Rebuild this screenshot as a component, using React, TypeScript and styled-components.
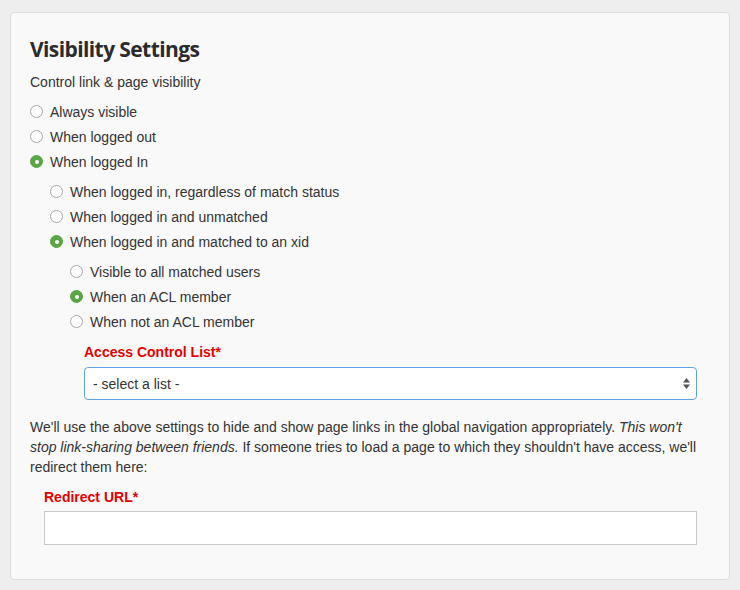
import React, { useState } from "react";
import styled, { createGlobalStyle } from "styled-components";

const GlobalStyle = createGlobalStyle`
  html, body {
    margin: 0;
    padding: 0;
    background: #eeeeee;
  }
  * {
    box-sizing: border-box;
  }
`;

type Option = { id: string; label: string };

const topOptions: Option[] = [
  { id: "always", label: "Always visible" },
  { id: "out", label: "When logged out" },
  { id: "in", label: "When logged In" },
];

const loggedInOptions: Option[] = [
  { id: "any", label: "When logged in, regardless of match status" },
  { id: "unmatched", label: "When logged in and unmatched" },
  { id: "matched", label: "When logged in and matched to an xid" },
];

const matchedOptions: Option[] = [
  { id: "all", label: "Visible to all matched users" },
  { id: "acl", label: "When an ACL member" },
  { id: "notacl", label: "When not an ACL member" },
];

const RadioGroup = ({
  options,
  value,
  onChange,
}: {
  options: Option[];
  value: string;
  onChange: (id: string) => void;
}) => (
  <>
    {options.map((o) => (
      <RadioRow key={o.id} onClick={() => onChange(o.id)}>
        <RadioDot $checked={value === o.id} />
        <span>{o.label}</span>
      </RadioRow>
    ))}
  </>
);

export default function App() {
  const [top, setTop] = useState("in");
  const [loggedIn, setLoggedIn] = useState("matched");
  const [matched, setMatched] = useState("acl");

  return (
    <Page>
      <GlobalStyle />
      <Card>
        <Title>Visibility Settings</Title>
        <Intro>Control link &amp; page visibility</Intro>

        <RadioGroup options={topOptions} value={top} onChange={setTop} />

        <Nested>
          <RadioGroup
            options={loggedInOptions}
            value={loggedIn}
            onChange={setLoggedIn}
          />
          <Nested>
            <RadioGroup
              options={matchedOptions}
              value={matched}
              onChange={setMatched}
            />
            <Field>
              <Label>Access Control List*</Label>
              <SelectBox>
                <span>- select a list -</span>
                <Arrows>
                  <svg width="7" height="11" viewBox="0 0 7 11">
                    <path d="M3.5 0 L7 4.5 H0 Z" fill="#555" />
                    <path d="M3.5 11 L7 6.5 H0 Z" fill="#555" />
                  </svg>
                </Arrows>
              </SelectBox>
            </Field>
          </Nested>
        </Nested>

        <Note>
          We'll use the above settings to hide and show page links in the
          global navigation appropriately.{" "}
          <em>This won't stop link-sharing between friends.</em> If someone
          tries to load a page to which they shouldn't have access, we'll
          redirect them here:
        </Note>

        <UrlField>
          <Label>Redirect URL*</Label>
          <TextInput type="text" />
        </UrlField>
      </Card>
    </Page>
  );
}

const Page = styled.div`
  width: 740px;
  height: 590px;
  padding: 12px 10px 10px 10px;
`;

const Card = styled.div`
  background: #f9f9f9;
  border: 1px solid #dcdcdc;
  border-radius: 4px;
  padding: 22px 32px 34px 19px;
  color: #333;
  font-family: "Liberation Sans", Arial, sans-serif;
  font-size: 14px;
`;

const Title = styled.h2`
  margin: 0 0 9px;
  font-family: "Open Sans", sans-serif;
  font-weight: 700;
  font-size: 21px;
  letter-spacing: -0.6px;
  line-height: 28px;
  color: #2b2b2b;
`;

const Intro = styled.p`
  margin: 0 0 7px;
  line-height: 20px;
`;

const RadioRow = styled.div`
  display: flex;
  align-items: center;
  gap: 7px;
  height: 25px;
  cursor: pointer;
`;

const RadioDot = styled.span<{ $checked: boolean }>`
  width: 13px;
  height: 13px;
  border-radius: 50%;
  flex-shrink: 0;
  position: relative;
  background: ${(p) => (p.$checked ? "#5aa546" : "#fff")};
  border: 1px solid ${(p) => (p.$checked ? "#5aa546" : "#a6a6a6")};

  &::after {
    content: "";
    display: ${(p) => (p.$checked ? "block" : "none")};
    position: absolute;
    left: 50%;
    top: 50%;
    width: 4px;
    height: 4px;
    margin: -2px 0 0 -2px;
    border-radius: 50%;
    background: #fff;
  }
`;

const Nested = styled.div`
  padding-left: 20px;
  padding-top: 5px;
`;

const Field = styled.div`
  padding: 8px 0 0 14px;
  display: flex;
  flex-direction: column;
  gap: 5px;
`;

const Label = styled.label`
  color: #e60000;
  font-weight: 700;
  font-size: 14px;
  line-height: 20px;
`;

const SelectBox = styled.div`
  height: 33px;
  border: 1px solid #5ea3e6;
  border-radius: 4px;
  background: #fff;
  display: flex;
  align-items: center;
  justify-content: space-between;
  padding: 0 6px 0 8px;
  font-size: 14px;
  color: #333;
`;

const Arrows = styled.span`
  display: flex;
  align-items: center;
`;

const Note = styled.p`
  margin: 17px 0 0;
  line-height: 20px;
`;

const UrlField = styled.div`
  padding: 10px 0 0 14px;
  display: flex;
  flex-direction: column;
  gap: 4px;
`;

const TextInput = styled.input`
  height: 34px;
  border: 1px solid #c8c8c8;
  background: #fff;
  border-radius: 0;
  outline: none;
  font-size: 14px;
  padding: 0 8px;
`;
